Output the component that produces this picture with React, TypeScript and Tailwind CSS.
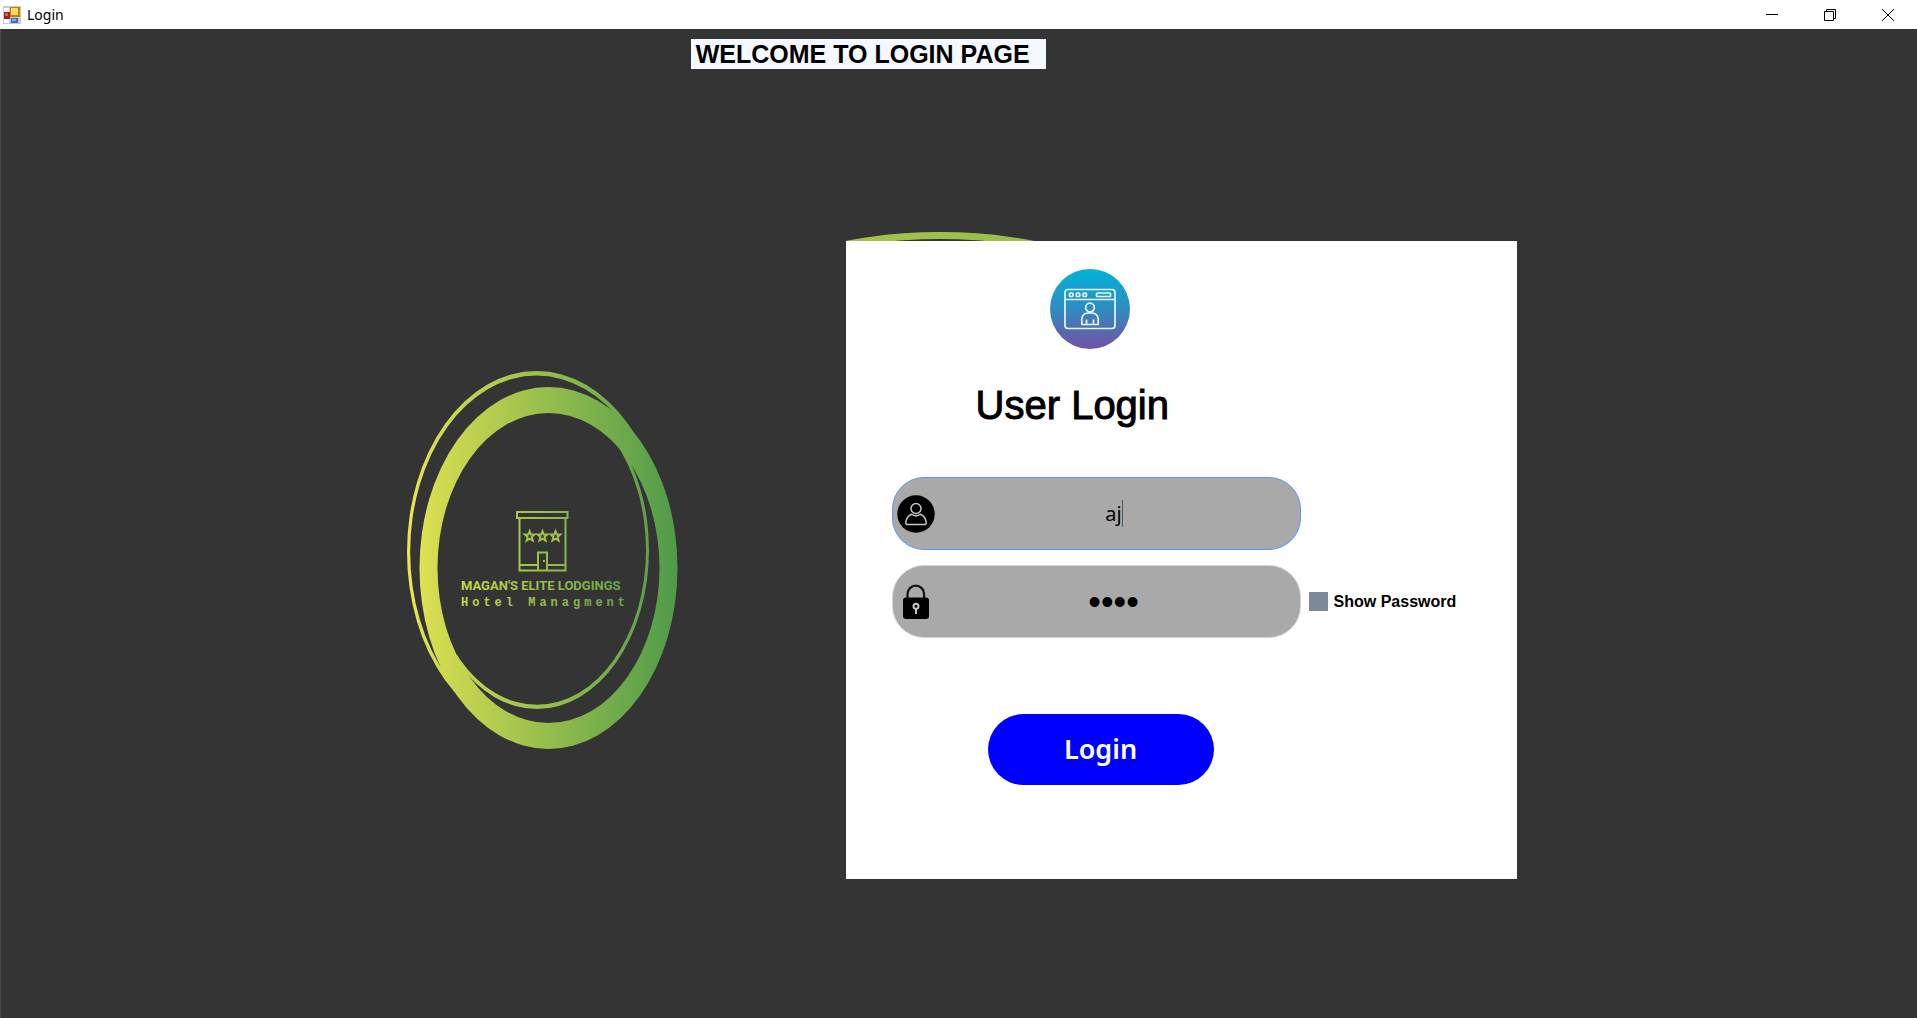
import { useState } from "react";

function AppIcon() {
  return (
    <svg className="h-[18px] w-[18px]" viewBox="0 0 18 18" aria-hidden="true">
      <rect width="18" height="18" fill="#c9c9c9" />
      <rect x="1" y="2" width="5" height="4" fill="#fff" />
      <rect x="1" y="13" width="5" height="4" fill="#fff" />
      <rect x="7" y="1" width="10" height="10" fill="#b8860b" />
      <rect x="8" y="2" width="7" height="7" fill="#ffd75a" />
      <rect x="1" y="6" width="6" height="7" fill="#a61c1c" />
      <rect x="2" y="7" width="3" height="3" fill="#e05a50" />
      <rect x="8" y="12" width="7" height="5" fill="#2f6fd0" />
      <rect x="9" y="13" width="4" height="2" fill="#7fb0f5" />
    </svg>
  );
}

function TitleBar() {
  return (
    <header className="flex h-[29px] items-center bg-white pl-[3px] font-['Noto_Sans',sans-serif] text-black">
      <AppIcon />
      <span className="ml-1.5 flex-1 text-sm">Login</span>
      <button aria-label="Minimize" className="flex h-full w-[58px] items-center justify-center">
        <svg className="h-3 w-3" viewBox="0 0 12 12">
          <path d="M0 5.500H12" stroke="#000" />
        </svg>
      </button>
      <button aria-label="Restore" className="flex h-full w-[58px] items-center justify-center">
        <svg className="h-3 w-3" viewBox="0 0 12 12" fill="none" stroke="#000">
          <path d="M.5 2.500H9.500V11.500H.5ZM2.500 2.500V.5H11.500V9.500H9.500" />
        </svg>
      </button>
      <button aria-label="Close" className="flex h-full w-[58px] items-center justify-center">
        <svg className="h-3 w-3" viewBox="0 0 12 12" stroke="#000">
          <path d="M0 0L12 12M12 0L0 12" />
        </svg>
      </button>
    </header>
  );
}

const STAR = "M0 -4.800L1.300 -1.600L4.800 -1.500L2.100 .9L3.100 4.600L0 2.700L-3.100 4.600L-2.100 .9L-4.800 -1.500L-1.300 -1.600Z";

function HotelLogo() {
  return (
    <svg
      className="w-[271px] shrink-0"
      viewBox="0 0 271 379"
      role="img"
      aria-label="Magan's Elite Lodgings Hotel Managment"
    >
      <defs>
        <linearGradient id="ring" gradientUnits="userSpaceOnUse" x1="0" y1="0" x2="271" y2="0">
          <stop offset="0" stopColor="#ece753" />
          <stop offset="0.1" stopColor="#d4dc50" />
          <stop offset="0.5" stopColor="#98bf4c" />
          <stop offset="1" stopColor="#4e9a4a" />
        </linearGradient>
        <linearGradient id="brand" gradientUnits="userSpaceOnUse" x1="54" y1="0" x2="217" y2="0">
          <stop offset="0" stopColor="#c8d84c" />
          <stop offset="0.5" stopColor="#98bf4c" />
          <stop offset="1" stopColor="#66a64b" />
        </linearGradient>
        <clipPath id="upperLeft">
          <path d="M0 0H271L20 379H0Z" />
        </clipPath>
        <clipPath id="lowerRight">
          <path d="M238 20L20 325V379H271V20Z" />
        </clipPath>
      </defs>
      <g fill="url(#ring)" fillRule="evenodd">
        <path d="M12.500 197a129 181 0 1 0 258 0a129 181 0 1 0 -258 0ZM30.500 197a111 155 0 1 0 222 0a111 155 0 1 0 -222 0Z" />
        <path
          clipPath="url(#upperLeft)"
          d="M0 181a129.500 181 0 1 0 259 0a129.500 181 0 1 0 -259 0ZM3.200 181a126.300 176.500 0 1 0 252.600 0a126.300 176.500 0 1 0 -252.600 0Z"
        />
        <path
          clipPath="url(#lowerRight)"
          d="M18 179a112 159 0 1 0 224 0a112 159 0 1 0 -224 0ZM21 179a109 154.700 0 1 0 218 0a109 154.700 0 1 0 -218 0Z"
        />
      </g>
      <g fill="none" stroke="url(#brand)" strokeWidth="2">
        <path d="M110 141H160.500V147H110ZM112.500 147V199.500H158.500V147M112.500 194H131M140 194H158.500M131 199V181.500H140V199" />
      </g>
      <g fill="none" stroke="#9cc24c" strokeWidth="2">
        <path d="M137 189v2" />
        <path d={STAR} transform="translate(122.700 165)" />
        <path d={STAR} transform="translate(135.500 165)" />
        <path d={STAR} transform="translate(148.500 165)" />
      </g>
      <g fill="url(#brand)" fontWeight="700">
        <text x="54" y="219" fontSize="13" fontFamily="Roboto, 'Liberation Sans', sans-serif">
          MAGAN'S ELITE LODGINGS
        </text>
        <text x="54" y="235" fontSize="12" className="tracking-[4px]" fontFamily="'Liberation Mono', monospace">
          Hotel Managment
        </text>
      </g>
    </svg>
  );
}

function RingTop() {
  return (
    <svg className="absolute bottom-full left-[-6px] h-[10px] w-[200px]" viewBox="0 0 200 10" aria-hidden="true">
      <defs>
        <linearGradient id="ringTop" x1="0" x2="1" y1="0" y2="0">
          <stop offset="0" stopColor="#b2ca4b" />
          <stop offset="1" stopColor="#86b84c" />
        </linearGradient>
      </defs>
      <path
        fill="url(#ringTop)"
        fillRule="evenodd"
        d="M-270 271a370 270 0 1 0 740 0a370 270 0 1 0 -740 0ZM-265 271a365 263 0 1 0 730 0a365 263 0 1 0 -730 0Z"
      />
    </svg>
  );
}

function UserPageIcon() {
  return (
    <svg className="ml-[204px] h-20 w-20" viewBox="0 0 80 80" fill="none" aria-hidden="true">
      <defs>
        <linearGradient id="badge" x1="0" x2="0" y1="0" y2="1">
          <stop offset="0" stopColor="#00b4d8" />
          <stop offset="0.5" stopColor="#2f8cc0" />
          <stop offset="1" stopColor="#7550a3" />
        </linearGradient>
      </defs>
      <circle cx="40" cy="40" r="40" fill="url(#badge)" />
      <g stroke="#e8f6fc" strokeWidth="1.700" strokeLinejoin="round">
        <rect x="15" y="20.500" width="50" height="39" rx="3" />
        <path d="M15 30.500H65" />
        <rect x="19.500" y="24" width="3.500" height="3.500" rx="1" />
        <rect x="26.300" y="24" width="3.500" height="3.500" rx="1" />
        <rect x="33" y="24" width="3.500" height="3.500" rx="1" />
        <rect x="46.500" y="24" width="14" height="3.500" rx="1" />
        <circle cx="40" cy="38.500" r="4.300" />
        <path d="M31.800 55.500V50a6 6 0 0 1 6 -6h4.400a6 6 0 0 1 6 6v5.500ZM36.500 55.500V50.500M43.500 55.500V50.500" />
      </g>
    </svg>
  );
}

function PersonIcon() {
  return (
    <svg className="h-[38px] w-[38px]" viewBox="0 0 38 38" fill="none" aria-hidden="true">
      <circle cx="19" cy="19" r="18.700" fill="#000" />
      <g stroke="#c4c4c4" strokeWidth="1.500" strokeLinejoin="round">
        <circle cx="19" cy="13.500" r="5" />
        <path d="M14.500 19.200C11.200 20.600 9.200 23.300 8.700 27.500C8.600 29 9.500 29.500 11 29.500H27C28.500 29.500 29.400 29 29.300 27.500C28.800 23.300 26.800 20.600 23.500 19.200C20.800 21.200 17.200 21.200 14.500 19.200Z" />
      </g>
    </svg>
  );
}

function LockIcon() {
  return (
    <svg className="h-[38px] w-[38px]" viewBox="0 0 38 38" fill="none" aria-hidden="true">
      <path d="M10.500 16V11a8.300 8.300 0 0 1 16.600 0V16" stroke="#111" strokeWidth="2.200" />
      <rect x="6" y="14.500" width="26" height="21.500" rx="3" fill="#000" />
      <circle cx="19" cy="23.200" r="2.500" stroke="#c4c4c4" strokeWidth="2" />
      <path d="M19 25.500V31" stroke="#c4c4c4" strokeWidth="2" />
    </svg>
  );
}

export default function App() {
  const [user, setUser] = useState("aj");
  const [password, setPassword] = useState("1234");
  const [visible, setVisible] = useState(false);

  return (
    <div className="flex min-h-screen flex-col bg-[#343434] font-['Liberation_Sans',Arial,sans-serif] text-black">
      <TitleBar />
      <main className="flex-1 border-l border-[#4a4a4a] pt-2.5">
        <h1 className="ml-[36%] w-fit bg-[#f5f8fe] pr-4 pl-[5px] text-[25px] leading-[30px] font-bold whitespace-nowrap">
          WELCOME TO LOGIN PAGE
        </h1>
        <div className="mt-[172px] flex items-start justify-between pr-[20.900%] pl-[21.200%]">
          <div className="mt-[130px]">
            <HotelLogo />
          </div>
          <form
            className="relative w-[671px] bg-white pt-7 pb-[94px]"
            onSubmit={(event) => event.preventDefault()}
          >
            <RingTop />
            <UserPageIcon />
            <h2 className="mt-8 ml-[130px] text-[40px] leading-12 font-medium [-webkit-text-stroke:1px_black]">
              User Login
            </h2>
            <label className="relative mt-12 ml-[46px] flex h-[73px] w-[409px] items-center rounded-[32px] border border-[#5e94ff] bg-[#a9a9a9] pl-1">
              <PersonIcon />
              <input
                aria-label="User name"
                value={user}
                onChange={(event) => setUser(event.target.value)}
                className="w-[358px] bg-transparent text-center font-['Noto_Sans',sans-serif] text-xl outline-none"
              />
              <span className="absolute top-[22px] left-[229px] h-[27px] w-px bg-[#555]" />
            </label>
            <div className="mt-[15px] ml-[46px] flex h-[73px] w-fit items-center">
              <label className="flex h-full w-[409px] items-center rounded-[32px] border border-[#d0d5dc] bg-[#a9a9a9] pl-1">
                <LockIcon />
                <input
                  aria-label="Password"
                  type={visible ? "text" : "password"}
                  value={password}
                  onChange={(event) => setPassword(event.target.value)}
                  className="h-full w-[358px] bg-transparent text-center font-['Liberation_Sans',sans-serif] text-4xl outline-none"
                />
              </label>
              <input
                id="show-password"
                type="checkbox"
                checked={visible}
                onChange={(event) => setVisible(event.target.checked)}
                className="ml-2 h-[19px] w-[19px] appearance-none bg-[#7d8999] checked:bg-[#5e94ff]"
              />
              <label htmlFor="show-password" className="ml-1.5 text-base font-bold whitespace-nowrap">
                Show Password
              </label>
            </div>
            <button className="mt-[76px] ml-[142px] block h-[71px] w-[226px] rounded-full bg-[#0000ff] font-['Noto_Sans',sans-serif] text-[27px] font-semibold text-white">
              Login
            </button>
          </form>
        </div>
      </main>
    </div>
  );
}
